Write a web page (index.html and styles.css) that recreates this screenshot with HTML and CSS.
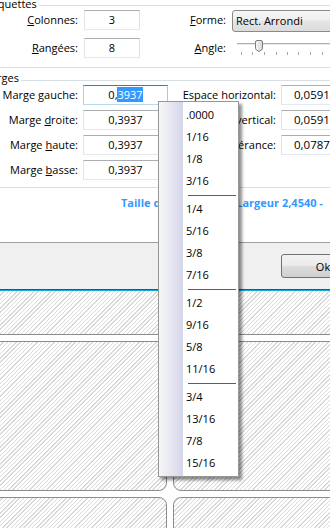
FILE: index.html
```html
<!DOCTYPE html>
<html lang="fr">
<head>
<meta charset="utf-8">
<title>Étiquettes</title>
<link rel="stylesheet" href="styles.css">
</head>
<body>
<div class="screen">
  <div class="dialog">
    <section class="group">
      <div class="legend legend-top"><span class="legend-text legend-text-top">Étiquettes</span><span class="legend-line"></span></div>
      <div class="grid-top">
        <span class="lbl"><u>C</u>olonnes:</span>
        <span class="field">3</span>
        <span class="lbl"><u>F</u>orme:</span>
        <span class="combo">Rect. Arrondi</span>
        <span class="lbl"><u>R</u>angées:</span>
        <span class="field">8</span>
        <span class="lbl"><u>A</u>ngle:</span>
        <svg class="slider" width="100" height="20" viewBox="0 0 100 20">
          <defs>
            <linearGradient id="tg" x1="0" y1="0" x2="1" y2="0">
              <stop offset="0" stop-color="#f7f7f7"/>
              <stop offset="1" stop-color="#d4d4d4"/>
            </linearGradient>
          </defs>
          <rect x="5" y="5" width="95" height="1" fill="#b0b0b0"/>
          <rect x="5" y="6" width="95" height="1" fill="#e8e8e8"/>
          <g fill="#a6a6a6">
            <rect x="9" y="14" width="1" height="3"/>
            <rect x="20" y="14" width="1" height="3"/>
            <rect x="32" y="14" width="1" height="3"/>
            <rect x="44" y="14" width="1" height="3"/>
            <rect x="55" y="14" width="1" height="3"/>
            <rect x="66" y="14" width="1" height="3"/>
            <rect x="78" y="14" width="1" height="3"/>
            <rect x="90" y="14" width="1" height="3"/>
          </g>
          <path d="M23.5 4 Q23.5 2.5 25 2.5 H29 Q30.5 2.5 30.5 4 V10.5 Q30.5 12 27 13.5 Q23.5 12 23.5 10.5 Z" fill="url(#tg)" stroke="#7c7c7c"/>
        </svg>
      </div>
    </section>
    <section class="group">
      <div class="legend legend-margins"><span class="legend-text legend-text-margins">Marges</span><span class="legend-line"></span></div>
      <div class="grid-margins">
        <span class="lbl">Marge <u>g</u>auche:</span>
        <span class="field field-focus">0,<span class="sel">3937</span></span>
        <span class="lbl">Espace horizontal:</span>
        <span class="field field-right">0,0591</span>
        <span class="lbl">Marge <u>d</u>roite:</span>
        <span class="field">0,3937</span>
        <span class="lbl">Espace vertical:</span>
        <span class="field field-right">0,0591</span>
        <span class="lbl">Marge <u>h</u>aute:</span>
        <span class="field">0,3937</span>
        <span class="lbl">Tolérance:</span>
        <span class="field field-right">0,0787</span>
        <span class="lbl">Marge <u>b</u>asse:</span>
        <span class="field">0,3937</span>
      </div>
    </section>
    <div class="size-info">Taille de l'étiquette : Largeur 2,4540 -&nbsp;&nbsp; Hauteur 1,0000</div>
  </div>
  <div class="footer"><button class="btn" type="button">Ok</button></div>
  <div class="accent"></div>
  <div class="preview">
    <div class="sheet-label cut-top"></div>
    <div class="sheet-label cut-top"></div>
    <div class="sheet-label"></div>
    <div class="sheet-label"></div>
    <div class="sheet-label"></div>
    <div class="sheet-label"></div>
  </div>
  <div class="menu">
    <div class="menu-item">.0000</div>
    <div class="menu-item">1/16</div>
    <div class="menu-item">1/8</div>
    <div class="menu-item">3/16</div>
    <div class="menu-sep"></div>
    <div class="menu-item">1/4</div>
    <div class="menu-item">5/16</div>
    <div class="menu-item">3/8</div>
    <div class="menu-item">7/16</div>
    <div class="menu-sep"></div>
    <div class="menu-item">1/2</div>
    <div class="menu-item">9/16</div>
    <div class="menu-item">5/8</div>
    <div class="menu-item">11/16</div>
    <div class="menu-sep"></div>
    <div class="menu-item">3/4</div>
    <div class="menu-item">13/16</div>
    <div class="menu-item">7/8</div>
    <div class="menu-item">15/16</div>
  </div>
</div>
</body>
</html>
```

FILE: styles.css
```css
* { box-sizing: border-box; }
html, body { margin: 0; padding: 0; }
body {
  width: 330px;
  height: 528px;
  overflow: hidden;
  background: #fff;
  font-family: "Open Sans", "Liberation Sans", sans-serif;
  font-size: 11px;
  color: #000;
}
.screen {
  position: relative;
  width: 330px;
  height: 528px;
  overflow: hidden;
}
.dialog {
  height: 242px;
  background: #fff;
}
.group {
  border-bottom: 1px solid #d5dfe5;
}
.legend {
  display: flex;
  align-items: flex-start;
  white-space: nowrap;
}
.legend-text {
  flex: none;
  line-height: 11px;
}
.legend-line {
  flex: 1;
  height: 1px;
  background: #d5dfe5;
  margin-left: 2px;
}
.legend-top { height: 10px; }
.legend-text-top { margin-left: -15px; margin-top: -2px; }
.legend-top .legend-line { margin-top: 5px; }
.legend-margins { height: 17px; }
.legend-text-margins { margin-left: -19px; margin-top: 4px; }
.legend-margins .legend-line { margin-top: 12px; }

.grid-top {
  display: grid;
  grid-template-columns: 78px 56px 80px 120px;
  grid-template-rows: 22px 20px;
  column-gap: 6px;
  row-gap: 6px;
  align-items: start;
  padding-bottom: 9px;
}
.grid-margins {
  display: grid;
  grid-template-columns: 78px 85px 103px 70px;
  grid-auto-rows: 20px;
  column-gap: 5px;
  row-gap: 5px;
  padding-bottom: 7px;
}
.lbl {
  height: 20px;
  line-height: 20px;
  text-align: right;
  white-space: nowrap;
}
.field {
  height: 20px;
  line-height: 18px;
  border: 1px solid;
  border-color: #abadb3 #dbdfe6 #e3e9ef #e2e3ea;
  background: #fff;
  text-align: center;
  white-space: nowrap;
}
.field-right {
  text-align: left;
  padding-left: 12px;
  font-size: 11.5px;
}
.field-focus {
  border-color: #3d7bad #a4c9e3 #b7d9ed #b5cfe7;
}
.sel {
  background: #3399ff;
  color: #fff;
}
.combo {
  height: 22px;
  line-height: 20px;
  padding-left: 3px;
  border: 1px solid #8a8a8a;
  border-radius: 3px;
  background: linear-gradient(#f6f6f6, #efefef 45%, #e5e5e5 50%, #dcdcdc);
  white-space: nowrap;
}
.slider { display: block; }

.size-info {
  padding: 9px 0 0 121px;
  line-height: 11px;
  font-weight: bold;
  color: #3399ff;
  white-space: nowrap;
}

.footer {
  height: 48px;
  border-top: 1px solid #a0a0a0;
  border-bottom: 1px solid #4d4d4d;
  background: #f0f0f0;
  padding: 11px 0 0 281px;
}
.btn {
  display: block;
  width: 84px;
  height: 24px;
  padding: 0;
  border: 1px solid #707070;
  border-radius: 3px;
  background: linear-gradient(#f2f2f2, #ebebeb 50%, #dddddd 50%, #cfcfcf);
  font: inherit;
  color: #000;
  text-align: center;
}
.accent {
  height: 1px;
  background: #1ba9d8;
}

.preview {
  display: grid;
  grid-template-columns: 267px 200px;
  grid-template-rows: 44px 150px 60px;
  column-gap: 6px;
  row-gap: 6px;
  margin-left: -100px;
  background: #fff;
}
.sheet-label {
  border: 1px solid #8c8c8c;
  border-radius: 8px;
  background: repeating-linear-gradient(-45deg, #d9d9d9 0 1px, #ffffff 1px 3px);
}
.sheet-label.cut-top {
  border-top: 0;
  border-radius: 0 0 8px 8px;
}

.menu {
  position: absolute;
  left: 158px;
  top: 101px;
  width: 81px;
  padding: 2px 0;
  border: 1px solid #979797;
  background: #fff linear-gradient(to right, #f6f6f6, #e8e8f2 45%, #d5d5ea) no-repeat 0 0 / 24px 100%;
  box-shadow: 3px 3px 3px rgba(0, 0, 0, 0.45);
}
.menu-item {
  height: 22px;
  line-height: 22px;
  padding-left: 27px;
  white-space: nowrap;
}
.menu-sep {
  display: flex;
  align-items: center;
  height: 6px;
  padding: 0 2px 0 29px;
}
.menu-sep::before {
  content: "";
  flex: 1;
  height: 1px;
  background: #5f5f5f;
}
```
